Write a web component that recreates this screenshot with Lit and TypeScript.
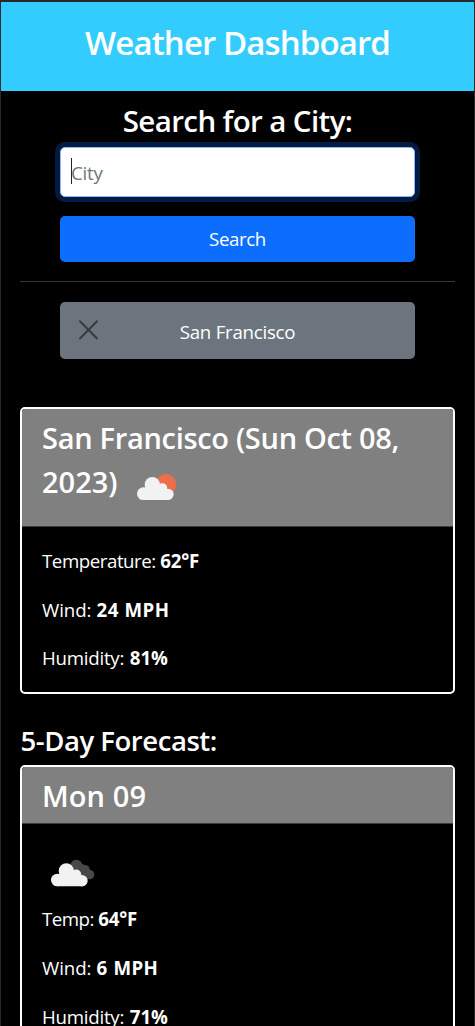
import { LitElement, html, css, svg } from "lit";
import { customElement } from "lit/decorators.js";

interface Reading {
  label: string;
  value: string;
  cls: string;
}

const current: Reading[] = [
  { label: "Temperature:", value: "62°F", cls: "temperature" },
  { label: "Wind:", value: "24 MPH", cls: "wind" },
  { label: "Humidity:", value: "81%", cls: "humidity" },
];

const monday: Reading[] = [
  { label: "Temp:", value: "64°F", cls: "temp" },
  { label: "Wind:", value: "6 MPH", cls: "wind" },
  { label: "Humidity:", value: "71%", cls: "humidity" },
];

const cloud = svg`
  <g fill="#f2f2f2">
    <circle cx="19" cy="50" r="19"></circle>
    <circle cx="46" cy="23" r="23"></circle>
    <circle cx="76" cy="33" r="14.5"></circle>
    <circle cx="93" cy="52" r="17"></circle>
    <path d="M19 69V34L40 26H60L80 34L96 48V69Z"></path>
  </g>`;

@customElement("app-root")
export class AppRoot extends LitElement {
  static styles = css`
    :host {
      display: block;
      height: 1026px;
      overflow: hidden;
      box-sizing: border-box;
      border: 1px solid #27292b;
      border-top-width: 2px;
      border-bottom: 0;
      background: #000;
      color: #fff;
      font-family: "Open Sans", "Noto Sans", sans-serif;
      font-size: 18.7px;
      line-height: 29px;
    }
    * { box-sizing: border-box; }
    h1, h2, h3, p { margin: 0; font-weight: 600; }
    .banner { height: 89px; background: #33ccff; text-align: center; }
    .banner h1 { font-size: 33px; line-height: 82px; letter-spacing: -0.9px; }
    .search { padding: 0 59px; display: flex; flex-direction: column; }
    .search h2 {
      font-size: 29.5px;
      height: 56px;
      line-height: 59px;
      text-align: center;
      letter-spacing: -0.6px;
    }
    .field {
      height: 50px;
      display: flex;
      align-items: center;
      padding-left: 10px;
      border: 1px solid #86b7fe;
      border-radius: 5px;
      background: #fff;
      color: #6c757d;
      box-shadow: 0 0 0 5px #031b40;
      letter-spacing: -0.2px;
    }
    .caret { width: 1px; height: 26px; margin: -3px -1px 0 0; background: #222; }
    .button {
      height: 46px;
      margin-top: 19px;
      padding: 0 0 2px;
      border: 0;
      border-radius: 5px;
      background: #0d6efd;
      color: #fff;
      font: inherit;
      letter-spacing: -0.4px;
    }
    .rule { height: 1px; margin: 19px 19px 20px; background: #383838; }
    .history {
      height: 57px;
      margin: 0 59px;
      padding: 0 19px;
      display: grid;
      grid-template-columns: 19px 1fr 19px;
      align-items: center;
      border-radius: 5px;
      background: #6c757d;
      text-align: center;
    }
    .history svg { width: 19px; height: 20px; display: block; margin-bottom: 2px; }
    .history span { padding-top: 2px; letter-spacing: -0.25px; }
    .card {
      margin: 48px 19px 0;
      border: 2px solid #fff;
      border-radius: 5px;
      overflow: hidden;
    }
    .card.day { margin-top: 0; }
    .head { background: #808080; padding: 7px 20px 0; height: 118px; border-bottom: 1px solid #3c3c3c; }
    .day .head { height: 57px; }
    .head h2 { font-size: 29px; line-height: 44px; letter-spacing: -0.3px; white-space: nowrap; }
    .day .head h2 { letter-spacing: 0.1px; line-height: 44px; }
    .line { display: flex; }
    .line h2 { letter-spacing: 0; }
    .sun { width: 40px; height: 26px; margin: 14px 0 0 19px; display: block; }
    .body { padding: 19px 20px 0; height: 165px; display: flex; flex-direction: column; gap: 19.7px; }
    .day .body { padding-top: 35px; height: 220px; }
    .clouds { width: 44px; height: 28px; margin: 0 0 -2.5px 9px; display: block; flex: none; }
    .body p { font-weight: 400; letter-spacing: -0.4px; }
    .body b { font-weight: 700; letter-spacing: -0.2px; }
    .body .temperature { letter-spacing: -0.45px; }
    .body .temp { letter-spacing: -0.5px; }
    .body .wind { letter-spacing: -0.1px; word-spacing: 0.5px; }
    .body .wind b { letter-spacing: 0.4px; }
    .body .humidity { letter-spacing: -0.25px; word-spacing: 1px; }
    .body .humidity b { letter-spacing: 0; }
    .forecast {
      font-size: 27.5px;
      line-height: 76px;
      padding-left: 19.5px;
      margin-top: 9px;
      height: 62px;
      letter-spacing: -0.45px;
    }
  `;

  private readings(items: Reading[]) {
    return items.map(
      (r) => html`<p class=${r.cls}>${r.label} <b>${r.value}</b></p>`
    );
  }

  render() {
    return html`
      <header class="banner"><h1>Weather Dashboard</h1></header>
      <section class="search">
        <h2>Search for a City:</h2>
        <div class="field"><i class="caret"></i>City</div>
        <button class="button">Search</button>
      </section>
      <div class="rule"></div>
      <div class="history">
        <svg viewBox="0 0 19 20" fill="none" stroke="#363b3f" stroke-width="2" stroke-linecap="round">
          <path d="M1 1.2L18 18.5M18 1.2L1 18.5"></path>
        </svg>
        <span>San Francisco</span>
      </div>
      <article class="card">
        <div class="head">
          <h2>San Francisco (Sun Oct 08,</h2>
          <div class="line">
            <h2>2023)</h2>
            <svg class="sun" viewBox="0 0 120 78">
              <circle cx="87" cy="31" r="31" fill="#ec6e4c"></circle>
              <g transform="translate(0 9)">${cloud}</g>
            </svg>
          </div>
        </div>
        <div class="body">${this.readings(current)}</div>
      </article>
      <h2 class="forecast">5-Day Forecast:</h2>
      <article class="card day">
        <div class="head"><h2>Mon 09</h2></div>
        <div class="body">
          <svg class="clouds" viewBox="0 0 132 84">
            <g fill="#484848">
              <circle cx="76" cy="20" r="18"></circle>
              <circle cx="102" cy="32" r="14"></circle>
              <circle cx="116" cy="47" r="14"></circle>
              <path d="M76 5L104 20L124 38L110 62L70 40Z"></path>
            </g>
            <g transform="translate(0 13)">${cloud}</g>
          </svg>
          ${this.readings(monday)}
        </div>
      </article>
    `;
  }
}
